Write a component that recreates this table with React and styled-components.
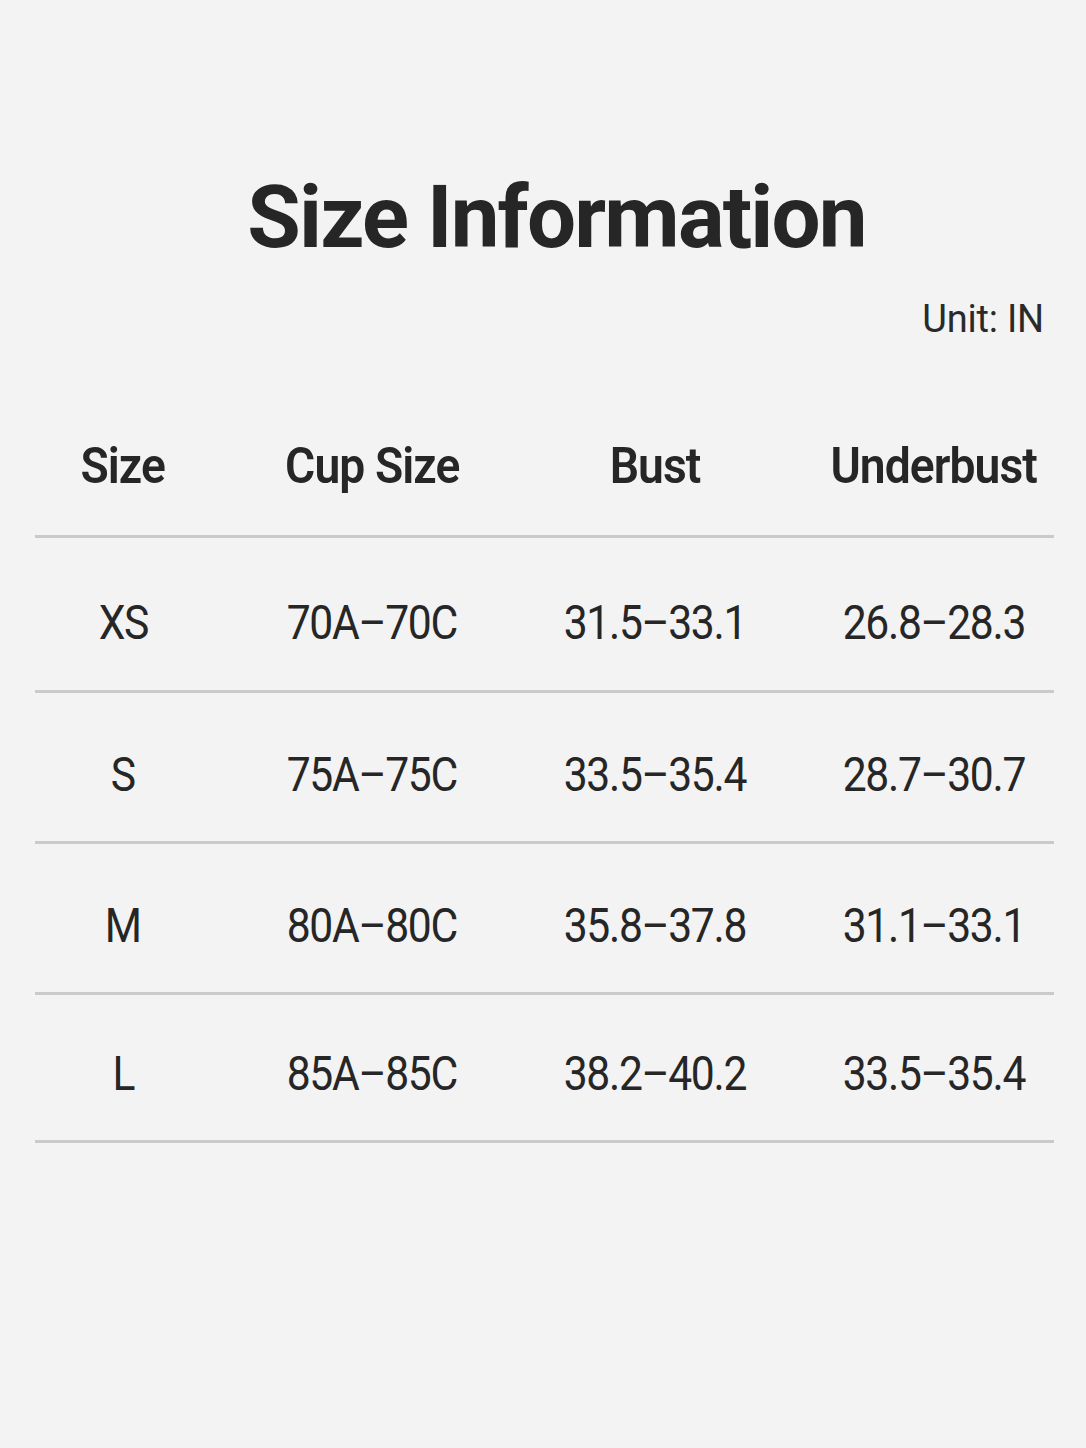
import React from "react";
import styled, { createGlobalStyle } from "styled-components";

const Global = createGlobalStyle`
  html, body { margin: 0; padding: 0; background: #f3f3f3; }
  body { font-family: Roboto, "Liberation Sans", Arial, sans-serif; color: #262626; }
`;

const Page = styled.div`
  width: 1086px;
  height: 1448px;
  box-sizing: border-box;
  background: #f3f3f3;
  padding: 174px 32px 0 35px;
`;

const Title = styled.h1`
  margin: 0;
  font-size: 87px;
  line-height: 1;
  font-weight: 700;
  text-align: center;
  padding-left: 24px;
  letter-spacing: -1.8px;
  color: #262626;
`;

const Unit = styled.div`
  margin-top: 39px;
  font-size: 38px;
  line-height: 1;
  text-align: right;
  padding-right: 10px;
  letter-spacing: -0.2px;
  color: #2a2a2a;
`;

const Table = styled.div`
  margin-top: 103px;
  display: flex;
  flex-direction: column;
`;

const Row = styled.div`
  display: grid;
  grid-template-columns: 176px 322px 244px 1fr;
  align-items: center;
  padding: ${(p) => (p.$head ? "0 0 44px" : "57px 0 42px")};
  border-bottom: 3px solid #cacaca;

  &:nth-child(2) {
    padding-top: 60px;
    padding-bottom: 43px;
  }

  &:last-child {
    padding-top: 54px;
    padding-bottom: 42px;
  }
`;

const Cell = styled.div`
  text-align: center;
  padding-left: ${(p) => (p.$last ? "37px" : "0")};
  white-space: nowrap;
`;

const Text = styled.span`
  display: inline-block;
  font-size: ${(p) => (p.$head ? "50px" : "49px")};
  font-weight: ${(p) => (p.$head ? 600 : 400)};
  line-height: ${(p) => (p.$head ? "50px" : "49px")};
  letter-spacing: ${(p) => (p.$head ? "-1px" : "-1.5px")};
  transform: scaleX(${(p) => (p.$head ? 0.925 : 0.87)});
  color: #262626;
`;

const headers = ["Size", "Cup Size", "Bust", "Underbust"];
const rows = [
  ["XS", "70A–70C", "31.5–33.1", "26.8–28.3"],
  ["S", "75A–75C", "33.5–35.4", "28.7–30.7"],
  ["M", "80A–80C", "35.8–37.8", "31.1–33.1"],
  ["L", "85A–85C", "38.2–40.2", "33.5–35.4"],
];

export default function App() {
  return (
    <Page>
      <Global />
      <Title>Size Information</Title>
      <Unit>Unit: IN</Unit>
      <Table>
        <Row $head>
          {headers.map((h, i) => (
            <Cell key={h} $last={i === 3}>
              <Text $head>{h}</Text>
            </Cell>
          ))}
        </Row>
        {rows.map((r) => (
          <Row key={r[0]}>
            {r.map((c, i) => (
              <Cell key={i} $last={i === 3}>
                <Text>{c}</Text>
              </Cell>
            ))}
          </Row>
        ))}
      </Table>
    </Page>
  );
}
